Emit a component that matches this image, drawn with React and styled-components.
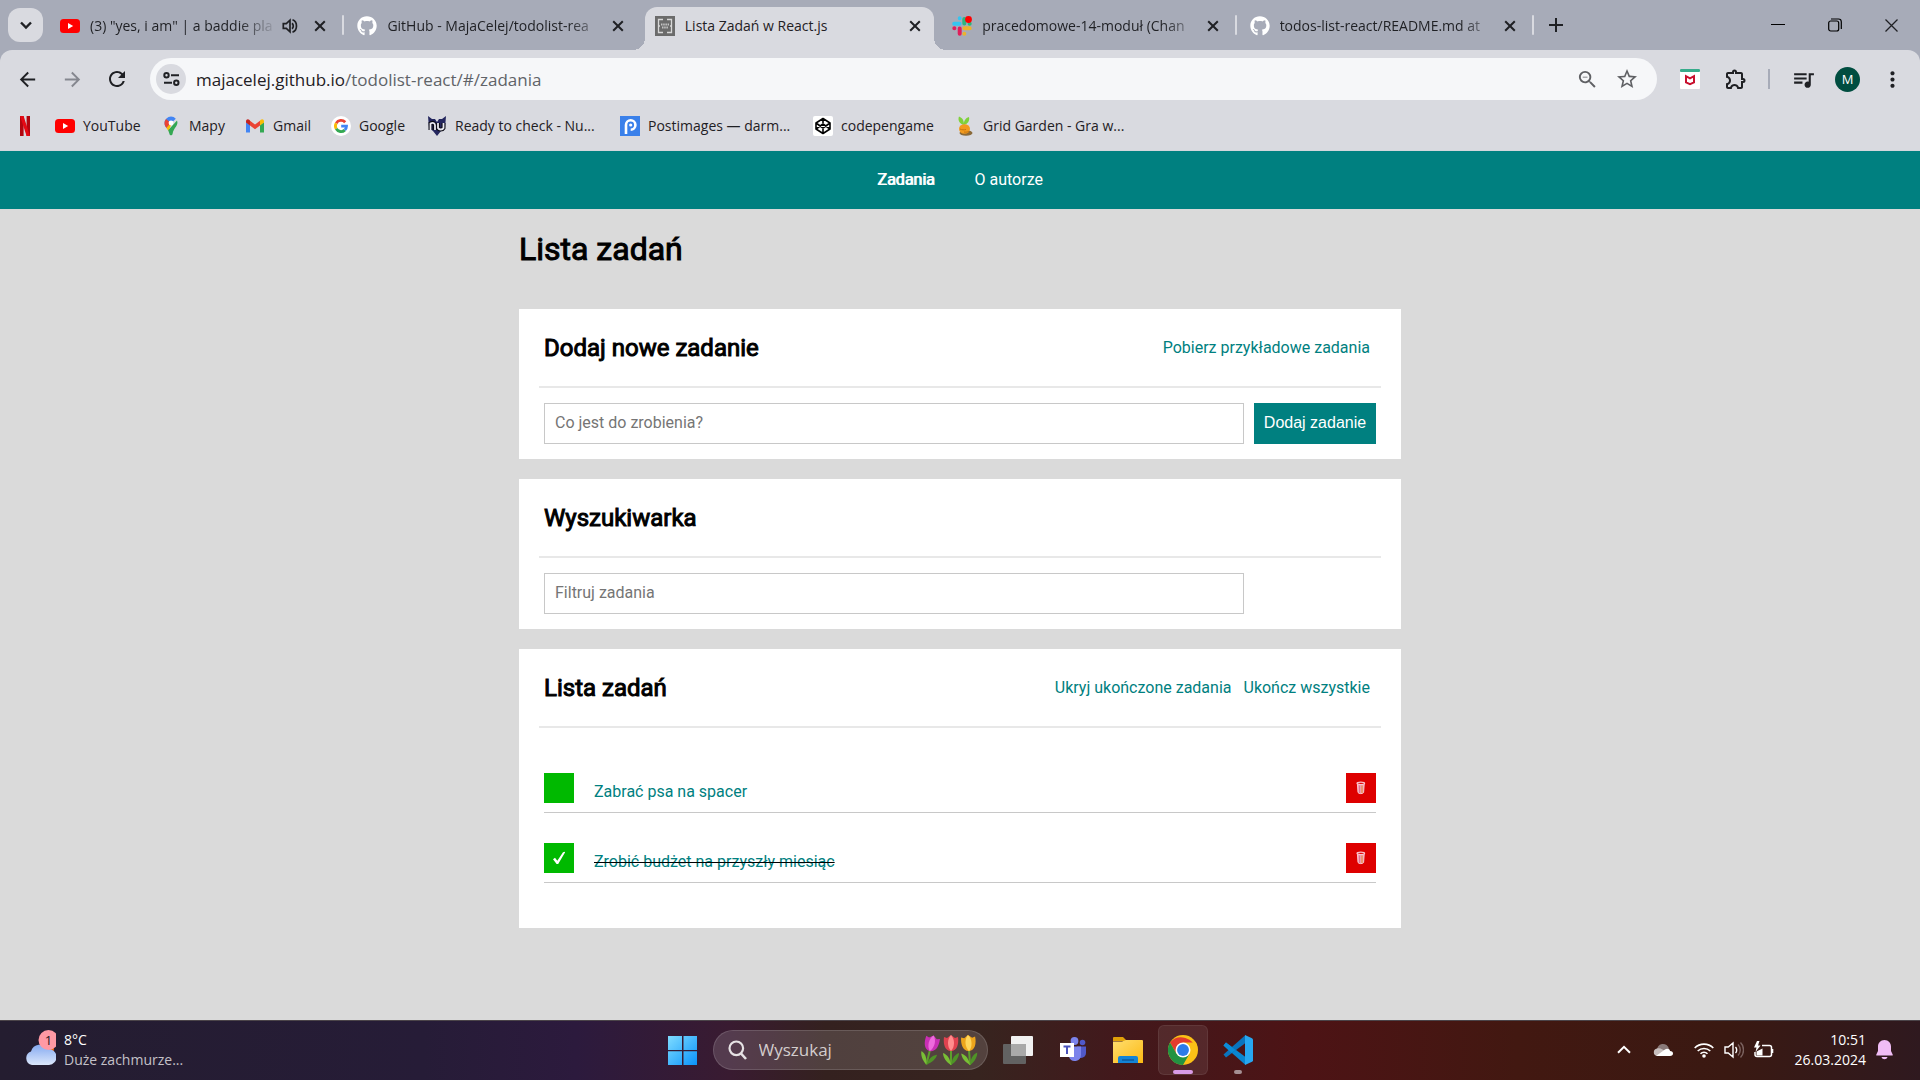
import React, { useState } from "react";
import styled, { createGlobalStyle, css } from "styled-components";
import {
  MdArrowBack,
  MdArrowForward,
  MdRefresh,
  MdStarBorder,
  MdZoomOut,
  MdOutlineExtension,
  MdQueueMusic,
  MdMoreVert,
} from "react-icons/md";
import { FaGithub } from "react-icons/fa";

const GlobalStyle = createGlobalStyle`
  *, *::before, *::after { box-sizing: border-box; }
  body { margin: 0; background: #dadada; }
  button, input { font: inherit; margin: 0; }
  button { border: 0; padding: 0; background: none; color: inherit; cursor: pointer; }
  a { color: inherit; text-decoration: none; }
  svg { display: block; flex: none; }
`;

const systemFont = `"Open Sans", "Noto Sans", sans-serif`;

const Desktop = styled.div`
  display: flex;
  flex-direction: column;
  min-height: 100vh;
`;

/* ---------- browser: tab strip ---------- */

const TabStrip = styled.header`
  display: flex;
  align-items: center;
  height: 50px;
  padding-left: 8px;
  background: #a7abb8;
  color: #1f2024;
  font: 14px/20px ${systemFont};
`;

const TabSearch = styled.button`
  display: grid;
  place-items: center;
  width: 35px;
  height: 34px;
  margin-right: 7px;
  border-radius: 12px;
  background: #d9dae0;
`;

const Tabs = styled.nav`
  display: flex;
  flex: 0 1 1487px;
  align-self: stretch;
  padding-top: 7px;
  min-width: 0;
`;

const TabSlot = styled.div`
  display: flex;
  flex: 1 1 0;
  min-width: 0;
`;

const TabBody = styled.div`
  position: relative;
  display: flex;
  flex: 1;
  align-items: center;
  min-width: 0;
  padding: 0 13px 6px 10px;
  border-radius: 12px 12px 0 0;
  ${(p) =>
    p.$active &&
    css`
      background: #d9dae0;
      &::before,
      &::after {
        content: "";
        position: absolute;
        bottom: 0;
        width: 12px;
        height: 12px;
      }
      &::before {
        right: 100%;
        background: radial-gradient(circle at 0 0, transparent 12px, #d9dae0 12px);
      }
      &::after {
        left: 100%;
        background: radial-gradient(circle at 100% 0, transparent 12px, #d9dae0 12px);
      }
    `}
`;

const TabTitle = styled.a`
  flex: 1;
  min-width: 0;
  margin: 0 4px 0 10px;
  white-space: nowrap;
  ${(p) => p.$fade && "mask-image: linear-gradient(to left, transparent, #000 40px);"}
`;

const TabSound = styled.span`
  margin-right: 16px;
`;

const TabDivider = styled.span`
  width: 2px;
  height: 20px;
  margin: 8px 3px 0;
  border-radius: 1px;
  background: ${(p) => (p.$hidden ? "transparent" : "#d9dae0")};
`;

const NewTab = styled.button`
  padding: 12px;
`;

const WindowButtons = styled.div`
  display: flex;
  align-self: stretch;
  margin-left: auto;
`;

const WindowButton = styled.button`
  display: grid;
  place-items: center;
  width: 57px;
`;

/* ---------- browser: toolbar ---------- */

const ToolbarArea = styled.div`
  background: #a7abb8;
`;

const Toolbar = styled.div`
  display: flex;
  align-items: center;
  padding: 8px 16px 8px 15px;
  border-radius: 12px 12px 0 0;
  background: #d9dae0;
  color: #1f2024;
`;

const ToolButton = styled.button`
  display: grid;
  place-items: center;
  width: 24px;
  height: 24px;
  margin-right: ${(p) => p.$gap || 0}px;
  color: ${(p) => p.$color || "#1f2024"};
`;

const AddressBar = styled.div`
  display: flex;
  flex: 1;
  align-items: center;
  min-width: 0;
  height: 42px;
  padding: 0 18px 0 6px;
  border-radius: 21px;
  background: #f6f7f9;
`;

const SiteInfo = styled.button`
  display: grid;
  place-items: center;
  width: 30px;
  height: 30px;
  margin-right: 10px;
  border-radius: 50%;
  background: #d9dae0;
`;

const Address = styled.a`
  flex: 1;
  padding-top: 2px;
  overflow: hidden;
  white-space: nowrap;
  color: #606368;
  font: 17px/24px ${systemFont};
`;

const Host = styled.span`
  color: #1f2024;
`;

const Extensions = styled.div`
  display: flex;
  align-items: center;
  margin-left: 21px;
`;

const ExtensionDivider = styled.span`
  width: 2px;
  height: 20px;
  margin-right: 21px;
  background: #a7abb8;
`;

const Avatar = styled.button`
  width: 25px;
  height: 25px;
  margin-right: 20px;
  border-radius: 50%;
  background: #004d40;
  color: #fff;
  font: 13px/25px ${systemFont};
`;

const Bookmarks = styled.nav`
  display: flex;
  align-items: center;
  gap: 20px;
  height: 43px;
  padding: 0 15px 6px;
  border-bottom: 1px solid #d2d6dc;
  background: #d9dae0;
  color: #1f2024;
  font: 14px/20px ${systemFont};
`;

const Bookmark = styled.a`
  display: flex;
  align-items: center;
  gap: 8px;
  white-space: nowrap;
  width: ${(p) => p.$width}px;
`;

/* ---------- the page ---------- */

const Page = styled.div`
  flex: 1;
  background: #dadada;
  color: #000;
  font: 16px/20px Roboto, sans-serif;
`;

const Navigation = styled.nav`
  display: flex;
  justify-content: center;
  gap: 40px;
  padding: 19px 20px;
  background: #008080;
  color: #fff;
`;

const NavLink = styled.a`
  ${(p) => p.$active && "text-shadow: 1px 0 #fff;"}
`;

const Container = styled.main`
  width: min(882px, 100%);
  margin: 0 auto;
  padding: 20px 0;
`;

const PageTitle = styled.h1`
  margin: 0 0 40px;
  font: 400 32px/40px Roboto, sans-serif;
  -webkit-text-stroke: 1px currentColor;
`;

const Section = styled.section`
  margin-bottom: 20px;
  background: #fff;
`;

const SectionHeader = styled.header`
  display: flex;
  align-items: center;
  justify-content: space-between;
  margin: 0 20px;
  padding: 20px 5px;
  min-height: 79px;
  border-bottom: 2px solid #e8e8e8;
`;

const SectionTitle = styled.h2`
  margin: 0;
  font: 400 24px/36px Roboto, sans-serif;
  -webkit-text-stroke: 1px currentColor;
`;

const HeaderActions = styled.div`
  display: flex;
  gap: 12px;
  padding: 0 6px;
`;

const TextButton = styled.button`
  color: #008080;
`;

const SectionBody = styled.div`
  padding: 15px 25px;
`;

const Form = styled.form`
  display: grid;
  grid-template-columns: minmax(0, 1fr) 122px;
  gap: 10px;
`;

const TextField = styled.input`
  height: 41px;
  padding: 0 10px 2px;
  border: 1px solid #c8c8c8;
  border-radius: 0;
  background: #fff;
  color: #000;
  outline: none;
  &::placeholder {
    color: #757575;
    opacity: 1;
  }
`;

const SubmitButton = styled.button`
  padding: 0 0 2px;
  background: #008080;
  color: #fff;
  font: 16px/20px "Liberation Sans", Arial, sans-serif;
`;

const TaskList = styled.ul`
  margin: 0;
  padding: 15px 25px 45px;
  list-style: none;
`;

const Task = styled.li`
  display: grid;
  grid-template-columns: 30px minmax(0, 1fr) 30px;
  gap: 20px;
  align-items: start;
  height: 70px;
  padding-top: 30px;
  border-bottom: 1px solid #c8c8c8;
`;

const ToggleBox = styled.div`
  display: grid;
  place-items: center;
  & > * {
    grid-area: 1 / 1;
  }
  svg {
    pointer-events: none;
  }
`;

const Toggle = styled.input`
  appearance: none;
  width: 30px;
  height: 30px;
  background: #00b900;
  cursor: pointer;
`;

const TaskName = styled.label`
  padding-top: 9px;
  color: #008080;
`;

const TaskText = styled.span`
  ${(p) => p.$done && "text-decoration: line-through #000 1px;"}
`;

const RemoveButton = styled.button`
  display: grid;
  place-items: center;
  width: 30px;
  height: 30px;
  background: #de0000;
`;

/* ---------- taskbar ---------- */

const Taskbar = styled.footer`
  display: grid;
  grid-template-columns: 1fr auto 1fr;
  align-items: center;
  height: 60px;
  padding-bottom: 1px;
  box-shadow: inset 0 1px #4b4449;
  background: linear-gradient(
    90deg,
    #241d30 0%,
    #261c37 22%,
    #2c1a3d 30%,
    #391b31 38%,
    #34211f 43%,
    #37241f 51%,
    #42191c 58%,
    #4d1315 68%,
    #421811 79%,
    #3a1912 90%,
    #2f191f 100%
  );
  color: #fff;
  font: 14px/20px ${systemFont};
`;

const Weather = styled.button`
  display: flex;
  align-items: center;
  gap: 8px;
  padding-left: 24px;
  text-align: left;
`;

const WeatherText = styled.span`
  display: flex;
  flex-direction: column;
`;

const Muted = styled.span`
  color: #c4c1c8;
`;

const Dock = styled.div`
  display: flex;
  align-items: center;
  gap: 5px;
`;

const DockButton = styled.button`
  position: relative;
  display: grid;
  place-items: center;
  width: 50px;
  height: 50px;
  border-radius: 6px;
  ${(p) =>
    p.$current &&
    "background: rgba(255, 255, 255, 0.08); box-shadow: inset 0 0 0 1px rgba(255, 255, 255, 0.07);"}
  &::after {
    content: "";
    position: absolute;
    bottom: 1px;
    width: ${(p) => p.$mark || 0}px;
    height: 4px;
    border-radius: 2px;
    background: ${(p) => (p.$current ? "#d99be6" : "#a58f93")};
  }
`;

const DockSearch = styled.label`
  display: flex;
  align-items: center;
  width: 275px;
  height: 40px;
  padding: 0 8px 0 14px;
  border: 1px solid rgba(255, 255, 255, 0.14);
  border-radius: 20px;
  background: rgba(255, 255, 255, 0.14);
`;

const DockSearchInput = styled.input`
  flex: 1;
  min-width: 0;
  padding: 0 0 0 12px;
  border: 0;
  outline: 0;
  background: none;
  color: #fff;
  font: 17px/24px ${systemFont};
  &::placeholder {
    color: #d3cdcd;
    opacity: 1;
  }
`;

const Tray = styled.div`
  display: flex;
  align-items: center;
  justify-content: flex-end;
  gap: 10px;
  padding-right: 27px;
`;

const TrayGroup = styled.div`
  display: flex;
  align-items: center;
  gap: ${(p) => p.$gap}px;
  margin-right: 11px;
`;

const Clock = styled.time`
  display: flex;
  flex-direction: column;
  text-align: right;
`;

/* ---------- drawings ---------- */

const CloseIcon = ({ size = 12, weight = 2 }) => (
  <svg width={size} height={size} viewBox="0 0 12 12" stroke="currentColor" strokeWidth={weight}>
    <path d="M1.2 1.2 10.8 10.8M10.8 1.2 1.2 10.8" />
  </svg>
);

const YouTubeIcon = () => (
  <svg width="20" height="20" viewBox="0 0 20 20">
    <rect y="3" width="20" height="14" rx="3.5" fill="#f00" />
    <path d="M8 7v6l5.2-3z" fill="#fff" />
  </svg>
);

const SoundIcon = () => (
  <svg width="16" height="16" viewBox="0 0 16 16" fill="none" stroke="#1f2024" strokeWidth="1.7">
    <path d="M1.3 5.6h3L8 2.2v11.6l-3.700-3.400h-3z" />
    <path d="M10 5.200c1.700 1.300 1.700 4.300 0 5.600M10.500 1.800c5.300 2 5.300 10.400 0 12.400" />
  </svg>
);

const ListIcon = () => (
  <svg width="20" height="20" viewBox="0 0 20 20">
    <rect width="20" height="20" fill="#6b6b6b" />
    <path
      d="M8 3.500H3.500v13H8M12 3.500h4.500v13H12M3 10h2M15 10h2"
      fill="none"
      stroke="#d8d8d8"
      strokeWidth="1.300"
    />
    <path d="M6 8.500h8M7 11.500h6" stroke="#c4c4c4" strokeWidth="1.800" strokeDasharray="1.500 .7" />
  </svg>
);

const SlackIcon = () => (
  <svg width="20" height="20" viewBox="0 0 20 20" strokeWidth="4" strokeLinecap="round">
    <path d="M7.700 2.200v.1M2.200 7.700h5.400" stroke="#36c5f0" />
    <path d="M12.300 3v4.600M17.600 7.700h.1" stroke="#2eb67d" />
    <path d="M12.300 12.300h5.400M12.300 17.700v.1" stroke="#ecb22e" />
    <path d="M7.700 12.400v5.400M2.300 12.300h.1" stroke="#e01e5a" />
    <circle cx="16.500" cy="3.500" r="3.400" fill="#f00" />
  </svg>
);

const TuneIcon = () => (
  <svg width="17" height="14" viewBox="0 0 17 14" fill="none" stroke="#1f2024" strokeWidth="2">
    <circle cx="3.500" cy="3.200" r="2.200" />
    <circle cx="13.300" cy="10.800" r="2.200" />
    <path d="M8 3.200h8M1 10.800h8" />
  </svg>
);

const ShieldExtension = () => (
  <svg width="20" height="20" viewBox="0 0 20 20">
    <rect width="20" height="20" rx="1" fill="#fff" />
    <rect width="20" height="3" rx="1" fill="#37ab8b" />
    <path
      d="M6 7.200v6.200l4 1.800 4-1.800V7.200L10 9.400z"
      fill="none"
      stroke="#c8102e"
      strokeWidth="2"
    />
  </svg>
);

const NetflixIcon = () => (
  <svg width="20" height="20" viewBox="0 0 20 20">
    <path d="M5 0h3.600v20L5 20zM11.600 0H15v20h-3.400z" fill="#b1060f" />
    <path d="M5 0h3.600L15 20h-3.400z" fill="#e50914" />
  </svg>
);

const MapsIcon = () => (
  <svg width="20" height="20" viewBox="0 0 20 20">
    <path d="M10 .5A6.500 6.500 0 0 0 3.500 7c0 2 .8 3.500 1.900 5L14.800 2.700A6.500 6.500 0 0 0 10 .5z" fill="#4285f4" />
    <path d="M5 2.900A6.500 6.500 0 0 0 3.500 7c0 2 .8 3.500 1.900 5L10 7z" fill="#ea4335" />
    <path d="M5.400 12 12 4.500 7.500 15z" fill="#fbbc04" />
    <path d="M16 4.500c2 5-3.300 7-4.400 13.200-.4 2-2.600 2.300-3.100.2L7.200 14.300z" fill="#34a853" />
    <circle cx="10" cy="7" r="2.400" fill="#fff" />
  </svg>
);

const GmailIcon = () => (
  <svg width="20" height="20" viewBox="0 0 20 20">
    <path d="M1 6v10.500h4V9z" fill="#4285f4" />
    <path d="M15 9v7.500h4V6z" fill="#34a853" />
    <path d="M5 9.500V4.700l5 3.800 5-3.800v4.800l-5 3.800z" fill="#ea4335" />
    <path d="M1 6.500V5.200c0-2 2-2.600 3.200-1.500L5 4.500v5z" fill="#c5221f" />
    <path d="M19 6.500V5.200c0-2-2-2.600-3.200-1.500l-.8.800v5z" fill="#fbbc04" />
  </svg>
);

const GoogleIcon = () => (
  <svg width="20" height="20" viewBox="0 0 20 20" fill="none" strokeWidth="2.800">
    <circle cx="10" cy="10" r="10" fill="#fff" />
    <path d="M14.200 6.300A5.600 5.600 0 0 0 5.200 7.200" stroke="#ea4335" />
    <path d="M5.200 7.200a5.600 5.600 0 0 0 0 5.600" stroke="#fbbc05" />
    <path d="M5.200 12.800a5.600 5.600 0 0 0 8.600 1.300" stroke="#34a853" />
    <path d="M13.800 14.100a5.600 5.600 0 0 0 1.700-3.900H10.200" stroke="#4285f4" />
  </svg>
);

const CrestIcon = () => (
  <svg width="20" height="20" viewBox="0 0 20 20">
    <path d="M1 0l4 3h3l2 3 2-3h3l4-3-1 12-4 3-4 5-4-5-4-3z" fill="#24265e" />
    <path
      d="M3.500 14V7.500c3-1.500 4.500 0 4.500 2V14M11 7v5c1 2 4.500 2 5.500 0V7"
      fill="none"
      stroke="#0b0b16"
      strokeWidth="4"
    />
    <path
      d="M3.500 14V7.500c3-1.500 4.500 0 4.500 2V14M11 7v5c1 2 4.500 2 5.500 0V7"
      fill="none"
      stroke="#e8e8f0"
      strokeWidth="1.800"
    />
  </svg>
);

const PostimagesIcon = () => (
  <svg width="20" height="20" viewBox="0 0 20 20">
    <rect width="20" height="20" fill="#3a80ea" />
    <path d="M6 18V9a4.700 4.700 0 1 1 4.700 4.700" fill="none" stroke="#fff" strokeWidth="2.600" />
    <circle cx="10.700" cy="9" r="1.600" fill="#fff" />
  </svg>
);

const CodepenIcon = () => (
  <svg width="20" height="20" viewBox="0 0 20 20">
    <rect width="20" height="20" rx="2" fill="#fff" />
    <path
      d="M10 2.500 17 7v6l-7 4.500L3 13V7zM10 2.500V7M10 13v4.500M3 7l7 5 7-5M3 13l7-5 7 5"
      fill="none"
      stroke="#000"
      strokeWidth="1.600"
      strokeLinejoin="round"
    />
  </svg>
);

const GardenIcon = () => (
  <svg width="20" height="20" viewBox="0 0 20 20">
    <ellipse cx="11" cy="17" rx="6.500" ry="2.800" fill="#8a6a3a" />
    <path d="M9 9C4.500 8 2.500 4 4 .5 8 2 9 5 9 9zM9 9c-.5-4 1.500-7 5-8 1 4-1.500 7-5 8z" fill="#7fd13b" />
    <ellipse cx="9.500" cy="13" rx="5.500" ry="4.800" fill="#f29a1e" />
    <path d="M5 13c2 1 4 1 6 .5M9 16c2 .4 4 0 5-.6" stroke="#c77410" fill="none" />
  </svg>
);

const CheckIcon = () => (
  <svg width="14" height="14" viewBox="0 0 14 14">
    <path d="M1 8.200 3 6.800 5.300 9.800 11 1.200 13 .8 13 1.500 6.200 13 4.600 13z" fill="#fff" />
  </svg>
);

const BinIcon = () => (
  <svg width="10" height="14" viewBox="0 0 10 14" fill="none" stroke="#f9c6cf">
    <path d="M1.400 3l.6 8.500c.6 1.500 5 1.500 5.600 0L8.200 3" fill="#f2a3b3" />
    <ellipse cx="4.800" cy="2.300" rx="3.800" ry="1.200" fill="#de0000" strokeWidth="1.200" />
    <path d="M3.600 4.500V12" stroke="#d95a8c" strokeWidth=".8" />
    <path d="M6 4.500V12" stroke="#e08a2a" strokeWidth="1" />
  </svg>
);

const WeatherIcon = () => (
  <svg width="32" height="40" viewBox="0 0 32 40">
    <defs>
      <linearGradient id="cloud" x1="0" y1="0" x2="0" y2="1">
        <stop offset="0" stopColor="#86aaf0" />
        <stop offset="1" stopColor="#dbe7fb" />
      </linearGradient>
    </defs>
    <circle cx="24" cy="19" r="6" fill="#f2690d" />
    <path d="M8 35a7 7 0 0 1-1-13.500A9.500 9.500 0 0 1 24 19a8 8 0 0 1 1 16z" fill="url(#cloud)" />
    <circle cx="24.500" cy="10" r="10" fill="#ff99a4" />
    <text x="24.500" y="15" textAnchor="middle" fontFamily="Open Sans, sans-serif" fontSize="13" fill="#1d1620">
      1
    </text>
  </svg>
);

const StartIcon = () => (
  <svg width="30" height="30" viewBox="0 0 30 30">
    <defs>
      <linearGradient id="start" x1="0" y1="0" x2="1" y2="1">
        <stop offset="0" stopColor="#7fdcff" />
        <stop offset="1" stopColor="#0a93fb" />
      </linearGradient>
    </defs>
    <path d="M0 1h14v14H0zM15.500 1H29v14H15.500zM0 16.200h14V30H0zM15.500 16.200H29V30H15.500z" fill="url(#start)" />
  </svg>
);

const Tulip = ({ x, petal, shade, tilt }) => (
  <g transform={`translate(${x} 0) rotate(${tilt} 9 16)`}>
    <path d="M9 14v17" stroke="#5d9e2c" strokeWidth="2" />
    <path d="M9 31C4 28 1 23 1 19c5 2 7 6 8 12z" fill="#79bf35" />
    <path d="M9 31c5-3 8-8 8-12-5 2-7 6-8 12z" fill="#4f9327" />
    <path d="M2 3c-1 7 1 14 7 14s8-7 7-14l-3 1-4-3-4 3z" fill={shade} />
    <path d="M9 1c4 4 4 12 0 16-4-4-4-12 0-16z" fill={petal} />
  </g>
);

const TulipsIcon = () => (
  <svg width="60" height="32" viewBox="0 0 60 32">
    <Tulip x={2} petal="#ee6bdc" shade="#c92fb4" tilt={14} />
    <Tulip x={23} petal="#ff8d8d" shade="#e0424f" tilt={0} />
    <Tulip x={41} petal="#ffd65c" shade="#eda51c" tilt={-4} />
  </svg>
);

const TaskViewIcon = () => (
  <svg width="30" height="28" viewBox="0 0 30 28">
    <rect x="8" width="22" height="20" rx="1" fill="#f1f1f1" />
    <rect y="8" width="23" height="20" rx="1" fill="#626262" />
    <path d="M8 8h15v12H8z" fill="#a9a9a9" />
  </svg>
);

const TeamsIcon = () => (
  <svg width="28" height="26" viewBox="0 0 28 26">
    <circle cx="23.500" cy="5.500" r="2.800" fill="#5059c9" />
    <path d="M18 9.500h9V16a5 5 0 0 1-5 5h-4z" fill="#5059c9" />
    <circle cx="15.500" cy="4" r="3.900" fill="#7b83eb" />
    <path d="M10 9.500h12V18a6.200 6.200 0 0 1-12 2z" fill="#7b83eb" />
    <rect x="1" y="6" width="14" height="14" fill="#fff" />
    <path d="M4.500 9.500h7M8 9.500V17" stroke="#4b53bc" strokeWidth="2" />
  </svg>
);

const FolderIcon = () => (
  <svg width="30" height="28" viewBox="0 0 30 28">
    <defs>
      <linearGradient id="folder" x1="0" y1="0" x2="1" y2="1">
        <stop offset="0" stopColor="#ffde6f" />
        <stop offset="1" stopColor="#fcb913" />
      </linearGradient>
    </defs>
    <path d="M0 2q0-1 1-1h9l4 4H0z" fill="#e0a009" />
    <path d="M0 5.500h9L13 4h16q1 0 1 1v22H0z" fill="url(#folder)" />
    <path d="M5 27v-5q0-2 2-2h16q2 0 2 2v5z" fill="#1384d6" />
    <path d="M9 24h12" stroke="#0c4f8f" strokeWidth="1.200" />
  </svg>
);

const ChromeIcon = () => (
  <svg width="30" height="30" viewBox="0 0 48 48">
    <circle cx="24" cy="24" r="24" fill="#fbc116" />
    <path d="M24 24H44.800A24 24 0 0 0 3.200 12L13.600 30z" fill="#e33b2e" />
    <path d="M44.800 12H24l0 12h23A24 24 0 0 0 44.800 12z" fill="#fbc116" />
    <path d="M3.200 12A24 24 0 0 0 24 48l10.400-18L24 24 13.600 30z" fill="#229342" />
    <circle cx="24" cy="24" r="12" fill="#fff" />
    <circle cx="24" cy="24" r="9.500" fill="#2c7be9" />
  </svg>
);

const VsCodeIcon = () => (
  <svg width="30" height="30" viewBox="0 0 30 30">
    <path d="M.5 10.500 3 7.500 22.500 22V30z" fill="#0a86d1" />
    <path d="M.5 19.500 3 22.500 22.500 8V0z" fill="#0a74bd" />
    <path d="M.5 10.500 3 7.500 12.500 15 8.500 18z" fill="#0b8bd8" />
    <path d="M22 0l7 3.200q1 .5 1 1.500v20.600q0 1-1 1.500L22 30z" fill="#27a7f0" />
  </svg>
);

const SearchIcon = () => (
  <svg width="19" height="20" viewBox="0 0 19 20" fill="none" stroke="#e6e2e4" strokeWidth="2.200">
    <circle cx="8.300" cy="8.300" r="6.800" />
    <path d="m13 13.500 5 5.500" strokeWidth="2.600" />
  </svg>
);

const ChevronIcon = ({ up, weight = 2 }) => (
  <svg width="14" height="9" viewBox="0 0 14 9" fill="none" stroke="currentColor" strokeWidth={weight}>
    <path d={up ? "M1 7.800 7 1.800l6 6" : "M2 1.500 7 6.500l5-5"} />
  </svg>
);

const OneDriveIcon = () => (
  <svg width="20" height="14" viewBox="0 0 20 14">
    <path d="M4 8a6 6 0 0 1 12-2l-5 5z" fill="#8a7a79" />
    <path d="M4 13a3.800 3.800 0 0 1 0-7.500c3-1 5 .5 9 3z" fill="#c7bfbe" />
    <path d="M3 13 12 6.500c2-1.500 5-.5 5 1.500 4 0 4 5 0 5z" fill="#fff" />
  </svg>
);

const WifiIcon = () => (
  <svg width="20" height="16" viewBox="0 0 20 16" fill="none" stroke="#fff" strokeWidth="1.600">
    <path d="M.7 6a13 13 0 0 1 18.600 0M3.700 9a9 9 0 0 1 12.600 0M6.500 11.800a5 5 0 0 1 7 0" />
    <circle cx="10" cy="14" r="1.800" fill="#fff" stroke="none" />
  </svg>
);

const VolumeIcon = () => (
  <svg width="20" height="18" viewBox="0 0 20 18" fill="none" stroke="#fff" strokeWidth="1.400">
    <path d="M1 6h3.200L9 2v14l-4.800-4H1zM11.500 6c1.600 1.600 1.600 4.400 0 6" />
    <path d="M14 3.500c3 3 3 8 0 11M16.500 1.500c4 4 4 11 0 15" stroke="#7b625f" />
  </svg>
);

const BatteryIcon = () => (
  <svg width="20" height="18" viewBox="0 0 20 18" fill="none" stroke="#fff" strokeWidth="1.500">
    <path d="M8 4.500h7.500q2 0 2 2v7q0 2-2 2H3q-2 0-2-2V11" />
    <path d="M2.500 14.500v-4l6-3v7z" fill="#fff" stroke="none" />
    <path d="M18.200 8v4" strokeWidth="2.200" />
    <path d="M3 0 0 6.500h2.500L1.500 11 6.500 4.500H4L5.500 0z" fill="#fff" stroke="none" />
  </svg>
);

const BellIcon = () => (
  <svg width="17" height="20" viewBox="0 0 17 20">
    <path d="M8.500 0C4.500 0 2 3 2 6.500V11L.3 14.500V15.500h16.400v-1L15 11V6.500C15 3 12.500 0 8.500 0zM5.500 17h6c-.8 3-5.200 3-6 0z" fill="#f0bdf5" />
  </svg>
);

/* ---------- data ---------- */

const tabs = [
  { title: '(3) "yes, i am" | a baddie pla', icon: <YouTubeIcon />, sound: true, fade: true },
  { title: "GitHub - MajaCelej/todolist-rea", icon: <FaGithub size={20} color="#fff" />, fade: true, beforeActive: true },
  { title: "Lista Zadań w React.js", icon: <ListIcon />, active: true },
  { title: "pracedomowe-14-moduł (Chan", icon: <SlackIcon />, fade: true },
  { title: "todos-list-react/README.md at", icon: <FaGithub size={20} color="#fff" />, fade: true },
];

const bookmarks = [
  { label: "", name: "Netflix", icon: <NetflixIcon />, width: 20 },
  { label: "YouTube", icon: <YouTubeIcon />, width: 86 },
  { label: "Mapy", icon: <MapsIcon />, width: 64 },
  { label: "Gmail", icon: <GmailIcon />, width: 66 },
  { label: "Google", icon: <GoogleIcon />, width: 76 },
  { label: "Ready to check - Nu...", icon: <CrestIcon />, width: 173 },
  { label: "Postimages — darm...", icon: <PostimagesIcon />, width: 173 },
  { label: "codepengame", icon: <CodepenIcon />, width: 122 },
  { label: "Grid Garden - Gra w...", icon: <GardenIcon />, width: 173 },
];

const initialTasks = [
  { id: 1, content: "Zabrać psa na spacer", done: false },
  { id: 2, content: "Zrobić budżet na przyszły miesiąc", done: true },
];

function Browser() {
  return (
    <>
      <TabStrip>
        <TabSearch aria-label="Szukaj kart">
          <ChevronIcon weight={2.4} />
        </TabSearch>
        <Tabs>
          {tabs.map((tab) => (
            <TabSlot key={tab.title}>
              <TabBody $active={tab.active}>
                {tab.icon}
                <TabTitle href="#/" $fade={tab.fade}>
                  {tab.title}
                </TabTitle>
                {tab.sound && (
                  <TabSound>
                    <SoundIcon />
                  </TabSound>
                )}
                <button aria-label="Zamknij kartę">
                  <CloseIcon />
                </button>
              </TabBody>
              <TabDivider $hidden={tab.active || tab.beforeActive} />
            </TabSlot>
          ))}
        </Tabs>
        <NewTab aria-label="Nowa karta">
          <svg width="14" height="14" viewBox="0 0 14 14" stroke="currentColor" strokeWidth="2">
            <path d="M7 0v14M0 7h14" />
          </svg>
        </NewTab>
        <WindowButtons>
          <WindowButton aria-label="Minimalizuj">
            <svg width="14" height="14" viewBox="0 0 14 14" stroke="#000">
              <path d="M0 6.500h14" />
            </svg>
          </WindowButton>
          <WindowButton aria-label="Przywróć">
            <svg width="14" height="14" viewBox="0 0 14 14" fill="none" stroke="#000" strokeWidth="1.200">
              <rect x=".7" y="3" width="10" height="10" rx="2" />
              <path d="M3 1h7.500a2.800 2.800 0 0 1 2.800 2.800V11" />
            </svg>
          </WindowButton>
          <WindowButton aria-label="Zamknij">
            <CloseIcon size={15} weight={1} />
          </WindowButton>
        </WindowButtons>
      </TabStrip>
      <ToolbarArea>
        <Toolbar>
          <ToolButton aria-label="Wstecz" $gap={21}>
            <MdArrowBack size={23} />
          </ToolButton>
          <ToolButton aria-label="Dalej" $gap={21} $color="#85878f">
            <MdArrowForward size={23} />
          </ToolButton>
          <ToolButton aria-label="Odśwież" $gap={21}>
            <MdRefresh size={24} />
          </ToolButton>
          <AddressBar>
            <SiteInfo aria-label="Informacje o witrynie">
              <TuneIcon />
            </SiteInfo>
            <Address href="#/zadania">
              <Host>majacelej.github.io</Host>/todolist-react/#/zadania
            </Address>
            <ToolButton aria-label="Powiększenie" $gap={16} $color="#5f6064">
              <MdZoomOut size={23} />
            </ToolButton>
            <ToolButton aria-label="Dodaj do zakładek" $color="#5f6064">
              <MdStarBorder size={24} />
            </ToolButton>
          </AddressBar>
          <Extensions>
            <ToolButton aria-label="McAfee" $gap={22}>
              <ShieldExtension />
            </ToolButton>
            <ToolButton aria-label="Rozszerzenia" $gap={20}>
              <MdOutlineExtension size={24} />
            </ToolButton>
            <ExtensionDivider />
            <ToolButton aria-label="Multimedia" $gap={20}>
              <MdQueueMusic size={25} />
            </ToolButton>
            <Avatar>M</Avatar>
            <ToolButton aria-label="Menu">
              <MdMoreVert size={25} />
            </ToolButton>
          </Extensions>
        </Toolbar>
      </ToolbarArea>
      <Bookmarks>
        {bookmarks.map((b) => (
          <Bookmark key={b.label} href="#/" aria-label={b.name} $width={b.width}>
            {b.icon}
            {b.label}
          </Bookmark>
        ))}
      </Bookmarks>
    </>
  );
}

function TodoPage() {
  const [tasks, setTasks] = useState(initialTasks);
  const toggle = (id) =>
    setTasks(tasks.map((t) => (t.id === id ? { ...t, done: !t.done } : t)));
  const remove = (id) => setTasks(tasks.filter((t) => t.id !== id));

  return (
    <Page>
      <Navigation>
        <NavLink href="#/zadania" $active>
          Zadania
        </NavLink>
        <NavLink href="#/autor">O autorze</NavLink>
      </Navigation>
      <Container>
        <PageTitle>Lista zadań</PageTitle>
        <Section>
          <SectionHeader>
            <SectionTitle>Dodaj nowe zadanie</SectionTitle>
            <HeaderActions>
              <TextButton>Pobierz przykładowe zadania</TextButton>
            </HeaderActions>
          </SectionHeader>
          <SectionBody>
            <Form onSubmit={(e) => e.preventDefault()}>
              <TextField aria-label="Nowe zadanie" placeholder="Co jest do zrobienia?" />
              <SubmitButton>Dodaj zadanie</SubmitButton>
            </Form>
          </SectionBody>
        </Section>
        <Section>
          <SectionHeader>
            <SectionTitle>Wyszukiwarka</SectionTitle>
          </SectionHeader>
          <SectionBody>
            <Form onSubmit={(e) => e.preventDefault()}>
              <TextField aria-label="Filtr zadań" placeholder="Filtruj zadania" />
            </Form>
          </SectionBody>
        </Section>
        <Section>
          <SectionHeader>
            <SectionTitle>Lista zadań</SectionTitle>
            <HeaderActions>
              <TextButton>Ukryj ukończone zadania</TextButton>
              <TextButton>Ukończ wszystkie</TextButton>
            </HeaderActions>
          </SectionHeader>
          <TaskList>
            {tasks.map((task) => (
              <Task key={task.id}>
                <ToggleBox>
                  <Toggle
                    type="checkbox"
                    id={`task-${task.id}`}
                    checked={task.done}
                    onChange={() => toggle(task.id)}
                  />
                  {task.done && <CheckIcon />}
                </ToggleBox>
                <TaskName htmlFor={`task-${task.id}`}>
                  <TaskText $done={task.done}>{task.content}</TaskText>
                </TaskName>
                <RemoveButton aria-label="Usuń" onClick={() => remove(task.id)}>
                  <BinIcon />
                </RemoveButton>
              </Task>
            ))}
          </TaskList>
        </Section>
      </Container>
    </Page>
  );
}

function SystemTaskbar() {
  return (
    <Taskbar>
      <Weather>
        <WeatherIcon />
        <WeatherText>
          <span>8°C</span>
          <Muted>Duże zachmurze...</Muted>
        </WeatherText>
      </Weather>
      <Dock>
        <DockButton aria-label="Start">
          <StartIcon />
        </DockButton>
        <DockSearch>
          <SearchIcon />
          <DockSearchInput aria-label="Wyszukaj" placeholder="Wyszukaj" />
          <TulipsIcon />
        </DockSearch>
        <DockButton aria-label="Widok zadań">
          <TaskViewIcon />
        </DockButton>
        <DockButton aria-label="Teams">
          <TeamsIcon />
        </DockButton>
        <DockButton aria-label="Eksplorator plików">
          <FolderIcon />
        </DockButton>
        <DockButton aria-label="Chrome" $current $mark={20}>
          <ChromeIcon />
        </DockButton>
        <DockButton aria-label="Visual Studio Code" $mark={8}>
          <VsCodeIcon />
        </DockButton>
      </Dock>
      <Tray>
        <TrayGroup $gap={22}>
          <ChevronIcon up />
          <OneDriveIcon />
        </TrayGroup>
        <TrayGroup $gap={10}>
          <WifiIcon />
          <VolumeIcon />
          <BatteryIcon />
        </TrayGroup>
        <Clock dateTime="2024-03-26T10:51">
          <span>10:51</span>
          <span>26.03.2024</span>
        </Clock>
        <BellIcon />
      </Tray>
    </Taskbar>
  );
}

export default function App() {
  return (
    <Desktop>
      <GlobalStyle />
      <Browser />
      <TodoPage />
      <SystemTaskbar />
    </Desktop>
  );
}
